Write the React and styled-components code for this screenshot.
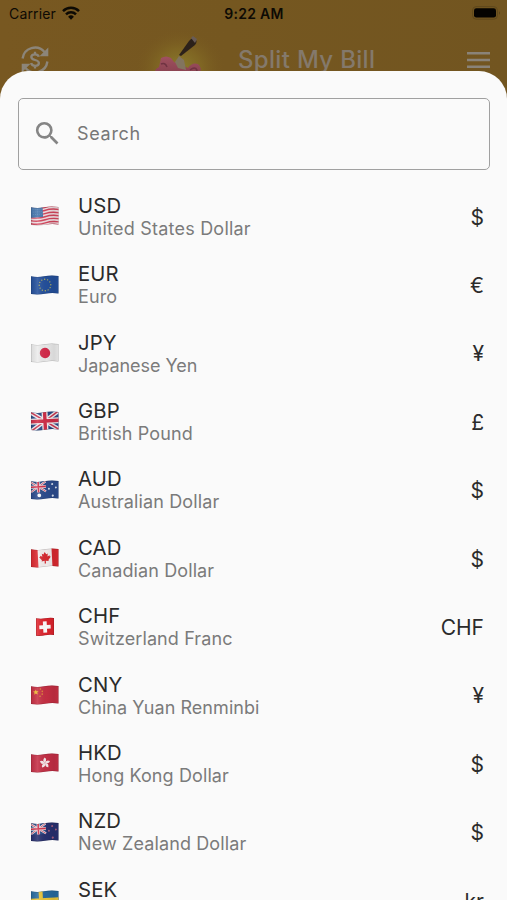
import React from 'react';
import styled, { createGlobalStyle } from 'styled-components';

const GlobalStyle = createGlobalStyle`
  * { box-sizing: border-box; }
  body { margin: 0; font-family: Inter, "Liberation Sans", sans-serif; }
`;

const Screen = styled.div`
  position: relative;
  width: 507px;
  height: 900px;
  overflow: hidden;
  background: linear-gradient(90deg, #785821 0%, #755720 45%, #725520 100%);
`;

const StatusBar = styled.div`
  display: grid;
  grid-template-columns: 1fr auto 1fr;
  align-items: center;
  height: 26px;
  padding: 0 6px 0 9px;
  color: #0d0a04;
`;

const Carrier = styled.div`
  display: flex;
  align-items: center;
  gap: 6px;
  font-size: 14px;
  letter-spacing: 0.15px;
`;

const Clock = styled.div`
  margin-right: 2px;
  font-size: 14px;
  font-weight: 600;
  letter-spacing: 0.28px;
`;

const BatterySlot = styled.div`
  display: flex;
  justify-content: flex-end;
`;

const AppBar = styled.div`
  display: flex;
  align-items: center;
  height: 68px;
  padding: 0 17px 0 20px;
`;

const Brand = styled.div`
  display: flex;
  align-items: center;
  flex: 1;
  margin-left: 82px;
`;

const Title = styled.h1`
  margin: 0 0 0 14px;
  font-size: 24px;
  font-weight: 500;
  line-height: 30px;
  letter-spacing: 0.32px;
  color: #84796b;
`;

const Sheet = styled.main`
  position: absolute;
  top: 71px;
  left: 0;
  right: 0;
  bottom: 0;
  overflow: hidden;
  padding: 27px 17px 0 18px;
  border-radius: 28px 28px 0 0;
  background: #fafafa;
`;

const SearchField = styled.label`
  display: flex;
  align-items: center;
  height: 72px;
  padding: 0 14px 2px 13px;
  gap: 14px;
  border: 1px solid #a0a0a0;
  border-radius: 5px;
  color: #7b7b7b;
`;

const SearchInput = styled.input`
  flex: 1;
  min-width: 0;
  padding: 0;
  border: 0;
  outline: 0;
  background: transparent;
  color: #222;
  font: 400 18px Inter, "Liberation Sans", sans-serif;
  letter-spacing: 0.7px;
  &::placeholder { color: #777; opacity: 1; }
`;

const CurrencyList = styled.ul`
  list-style: none;
  margin: 12px 0 0;
  padding: 0;
`;

const CurrencyRow = styled.li`
  display: flex;
  align-items: center;
  height: 68.4px;
  padding: 0 6px 0 12px;
`;

const FlagBox = styled.div`
  width: 30px;
  height: 22px;
  margin-right: 18px;
  svg { display: block; }
`;

const Labels = styled.div`
  flex: 1;
  padding-top: 1.4px;
`;

const Code = styled.div`
  font-size: 20.3px;
  line-height: 24px;
  letter-spacing: 0.15px;
  color: #2b2b2b;
`;

const Name = styled.div`
  font-size: 18px;
  line-height: 22px;
  letter-spacing: ${({ $spacing = 0.1 }) => $spacing}px;
  color: #7b7b7b;
`;

const Sign = styled.div`
  padding-top: 2px;
  font-size: 21px;
  color: #2b2b2b;
`;

function WifiIcon() {
  return (
    <svg width="18" height="14" viewBox="0 0 18 14" fill="none" stroke="#0d0a04" strokeWidth="2.5">
      <path d="M1 5.1a11.4 11.4 0 0 1 16 0" />
      <path d="M4 8.3a7.2 7.2 0 0 1 10 0" />
      <path d="M9 13.7 6.1 10.8a4.1 4.1 0 0 1 5.8 0Z" fill="#0d0a04" stroke="none" />
    </svg>
  );
}

function BatteryIcon() {
  return (
    <svg width="29" height="14" viewBox="0 0 29 14">
      <rect x=".6" y=".6" width="24.8" height="12.6" rx="3.6" fill="none" stroke="#5f481c" />
      <rect x="2" y="2.2" width="22" height="9.4" rx="2.3" fill="#050301" />
      <path d="M27 5q1.6 1.9 0 4Z" fill="#4f3b17" />
    </svg>
  );
}

function ExchangeIcon() {
  return (
    <svg width="30" height="30" viewBox="0 0 30 30" fill="none" stroke="#8c8579" strokeWidth="2.4">
      <path d="M2.6 13.5A12.5 12.5 0 0 1 24.5 7M27.4 16.5A12.5 12.5 0 0 1 5.5 23" />
      <path d="M28.3 2.5v8.8h-8.8ZM1.7 27.5v-8.8h8.8Z" fill="#8c8579" stroke="none" />
      <path d="M18.8 11.8c-.5-1.7-1.9-2.5-3.8-2.5-2.2 0-3.7 1.1-3.7 2.7 0 4 7.6 2 7.6 6 0 1.8-1.7 2.8-3.8 2.8-2.2 0-3.6-.9-4-2.7M15 6.8v2.5M15 20.8v2.7" strokeWidth="2.3" />
    </svg>
  );
}

function PigLogo() {
  return (
    <svg width="92" height="64" viewBox="0 0 92 64">
      <defs>
        <radialGradient id="pigGlow">
          <stop offset="0" stopColor="#8b7d2e" />
          <stop offset=".5" stopColor="#826a24" stopOpacity=".75" />
          <stop offset="1" stopColor="#785a20" stopOpacity="0" />
        </radialGradient>
        <linearGradient id="pigSkin" x2="0" y2="1">
          <stop stopColor="#a0505f" />
          <stop offset="1" stopColor="#7e3c49" />
        </linearGradient>
      </defs>
      <ellipse cx="48" cy="40" rx="44" ry="38" fill="url(#pigGlow)" />
      <path d="M23 46q-1-5 4-7l2-9q5-3 10 0l3 4 10 4 4 2q4-6 10-4 5 4 1 11v6H23Z" fill="url(#pigSkin)" />
      <path d="M29 36q4-2 6 3M58 42q5-4 7 0-1 4-4 4" stroke="#703342" strokeWidth="1.5" fill="none" />
      <path d="m43 34 4-6 5 4 2 10-8-2Z" fill="#82745f" />
      <path d="M47 27 57 13q3-4 6-2 3 2 0 6L49 28Z" fill="#2c211a" />
      <path d="m59 10 2-2 4 3-2 4Z" fill="#685b56" />
    </svg>
  );
}

function MenuIcon() {
  return (
    <svg width="23" height="18" viewBox="0 0 23 18" fill="#8a8378">
      <path d="M0 1h23v2.4H0zM0 7.8h23v2.4H0zM0 14.6h23V17H0z" />
    </svg>
  );
}

function SearchIcon() {
  return (
    <svg width="31" height="31" viewBox="0 0 24 24" fill="#858585">
      <path d="M15.5 14h-.79l-.28-.27A6.47 6.47 0 0 0 16 9.5 6.5 6.5 0 1 0 9.5 16c1.61 0 3.09-.59 4.23-1.57l.27.28v.79l5 4.99L20.49 19l-4.99-5zm-6 0A4.5 4.5 0 1 1 14 9.5 4.5 4.5 0 0 1 9.5 14z" />
    </svg>
  );
}

function UnionJack() {
  return (
    <>
      <path d="M0 0h30v22H0z" fill="#2b4b86" />
      <path d="m0 1 30 20M30 1 0 21" stroke="#f0edf1" strokeWidth="4.2" />
      <path d="m0 1 30 20M30 1 0 21" stroke="#cf3851" strokeWidth="1.5" />
      <path d="M15 0v22M0 11h30" stroke="#f3eef0" strokeWidth="6" />
      <path d="M15 0v22M0 11h30" stroke="#d02f49" strokeWidth="3.4" />
    </>
  );
}

function SouthernFlag({ base, star, big }) {
  return (
    <>
      <path d="M0 0h30v22H0z" fill={base} />
      <g transform="translate(1 2) scale(.5)"><UnionJack /></g>
      {big && <circle cx="9" cy="16" r="1.9" fill="#fff" />}
      <g fill={star}>
        <circle cx="22.5" cy="5.5" r="1" />
        <circle cx="19" cy="10" r="1" />
        <circle cx="26" cy="9" r="1" />
        <circle cx="22.5" cy="17" r="1.1" />
      </g>
    </>
  );
}

const ringDots = Array.from({ length: 12 }, (_, i) => {
  const angle = (i * Math.PI) / 6;
  return [15 + 5.8 * Math.sin(angle), 11 - 5.8 * Math.cos(angle)];
});

const flagArt = {
  USD: (
    <>
      <path d="M0 0h30v22H0z" fill="#f2dfe3" />
      <path d="M0 2.5q8 2 15 0t15 0M0 5.5q8 2 15 0t15 0M0 8.6q8 2 15 0t15 0M0 11.7q8 2 15 0t15 0M0 14.8q8 2 15 0t15 0M0 17.9q8 2 15 0t15 0M0 20.7q8 2 15 0t15 0" stroke="#d5475e" strokeWidth="1.45" fill="none" />
      <path d="M1 0h12v12H1z" fill="#4777ae" />
      <path d="M3 4h9M3 6.5h9M3 9h9" stroke="#7399c2" strokeWidth=".6" strokeDasharray="1 1" />
    </>
  ),
  EUR: (
    <>
      <path d="M0 0h30v22H0z" fill="#24509c" />
      {ringDots.map(([x, y], i) => <circle key={i} cx={x} cy={y} r=".7" fill="#b6b45f" />)}
    </>
  ),
  JPY: (
    <>
      <path d="M0 0h30v22H0z" fill="#ececec" />
      <circle cx="15" cy="11" r="5.2" fill="#d52b4b" />
    </>
  ),
  GBP: <UnionJack />,
  AUD: <SouthernFlag base="#2c4c8e" star="#dce4f1" big />,
  CAD: (
    <>
      <path d="M0 0h30v22H0z" fill="#f5efef" />
      <path d="M0 0h8v22H0zM22 0h8v22h-8z" fill="#db2930" />
      <path d="m15 5 1.4 2.4 1.6-.8-.4 3 2-1.2.3 1.3 1 .2-2.6 3.3.3 1-3-.4.2 2.8h-1.4l.1-2.8-3 .4.3-1-2.7-3.3 1-.2.4-1.3 1.9 1.2-.4-3 1.6.8Z" fill="#d82b32" />
    </>
  ),
  CHF: (
    <>
      <path d="M0 0h30v22H0z" fill="#df242d" />
      <path d="M15 5.3v11.4M9.3 11h11.4" stroke="#fff" strokeWidth="3.8" />
    </>
  ),
  CNY: (
    <>
      <path d="M0 0h30v22H0z" fill="#c72f43" />
      <path d="m6 5 .8 1.8 2 .1-1.5 1.3.5 2L6 9.1l-1.8 1.1.5-2-1.5-1.3 2-.1Z" fill="#f1bd36" />
      <g fill="#e28b36"><circle cx="10.7" cy="4.8" r=".8" /><circle cx="12.5" cy="7.2" r=".8" /><circle cx="12.3" cy="10" r=".8" /><circle cx="10" cy="12" r=".8" /></g>
    </>
  ),
  HKD: (
    <>
      <path d="M0 0h30v22H0z" fill="#c52f46" />
      {[0, 72, 144, 216, 288].map((turn) => (
        <path key={turn} d="M15 11q-3.2-2.4 0-5.4 2.6 2 0 5.4" fill="#f8e9ec" transform={`rotate(${turn} 15 11)`} />
      ))}
    </>
  ),
  NZD: <SouthernFlag base="#28306f" star="#a85f80" />,
  SEK: (
    <>
      <path d="M0 0h30v22H0z" fill="#286b9f" />
      <path d="M11 0v22M0 11h30" stroke="#eac63a" strokeWidth="4" />
    </>
  ),
};

const wave = 'M1 2.2Q7 3.7 14 2.3T28.5 2V19.6Q22 18.4 15 19.8T1 20.1Z';
const squareWave = 'M6 2.3Q11 3.2 15 2.3T24 1.9V19Q19 18.4 15 19.3T6 19.7Z';

function Flag({ code }) {
  const shape = code === 'CHF' ? squareWave : wave;
  return (
    <svg width="30" height="22" viewBox="0 0 30 22">
      <defs>
        <clipPath id={`shape-${code}`}><path d={shape} /></clipPath>
        <linearGradient id={`shade-${code}`}>
          <stop stopOpacity=".07" />
          <stop offset=".25" stopColor="#fff" stopOpacity=".12" />
          <stop offset=".55" stopOpacity=".03" />
          <stop offset=".8" stopOpacity=".09" />
          <stop offset="1" stopOpacity=".03" />
        </linearGradient>
      </defs>
      <g clipPath={`url(#shape-${code})`}>
        <g transform="rotate(-3 15 11)">{flagArt[code]}</g>
        <path d="M0 0h30v22H0z" fill={`url(#shade-${code})`} />
        <path d={shape} fill="none" stroke="#000" strokeOpacity=".2" />
      </g>
    </svg>
  );
}

const currencies = [
  ['USD', 'United States Dollar', '$', 0.22],
  ['EUR', 'Euro', '€'],
  ['JPY', 'Japanese Yen', '¥', -0.04],
  ['GBP', 'British Pound', '£', 0.14],
  ['AUD', 'Australian Dollar', '$', 0.12],
  ['CAD', 'Canadian Dollar', '$', 0.11],
  ['CHF', 'Switzerland Franc', 'CHF', 0.1],
  ['CNY', 'China Yuan Renminbi', '¥', 0.05],
  ['HKD', 'Hong Kong Dollar', '$', 0.11],
  ['NZD', 'New Zealand Dollar', '$', 0.12],
  ['SEK', 'Swedish Krona', 'kr'],
];

export default function App() {
  return (
    <>
      <GlobalStyle />
      <Screen>
        <StatusBar>
          <Carrier>Carrier <WifiIcon /></Carrier>
          <Clock>9:22 AM</Clock>
          <BatterySlot><BatteryIcon /></BatterySlot>
        </StatusBar>
        <AppBar>
          <ExchangeIcon />
          <Brand><PigLogo /><Title>Split My Bill</Title></Brand>
          <MenuIcon />
        </AppBar>
        <Sheet>
          <SearchField>
            <SearchIcon />
            <SearchInput placeholder="Search" aria-label="Search" />
          </SearchField>
          <CurrencyList>
            {currencies.map(([code, name, sign, spacing]) => (
              <CurrencyRow key={code}>
                <FlagBox><Flag code={code} /></FlagBox>
                <Labels><Code>{code}</Code><Name $spacing={spacing}>{name}</Name></Labels>
                <Sign>{sign}</Sign>
              </CurrencyRow>
            ))}
          </CurrencyList>
        </Sheet>
      </Screen>
    </>
  );
}
